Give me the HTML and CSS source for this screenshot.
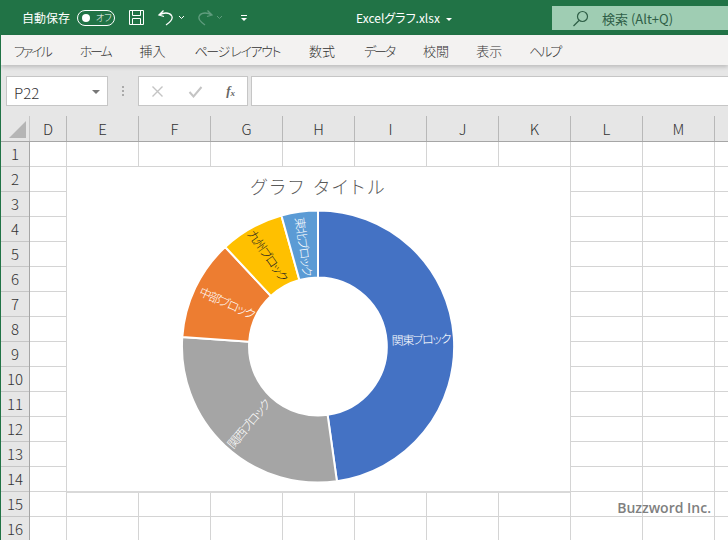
FILE: index.html
```html
<!DOCTYPE html>
<html lang="ja">
<head>
  <meta charset="UTF-8">
  <meta name="viewport" content="width=device-width, initial-scale=1.0">
  <title>Excelグラフ.xlsx</title>
  <link rel="stylesheet" href="styles.css">
</head>
<body>
  <div class="app">
    <div class="title-bar">
      <div class="quick-access">
        <span class="autosave-label">自動保存</span>
        <span class="toggle"><span class="toggle-dot"></span><span class="toggle-text">オフ</span></span>
        <svg class="icon save-icon" width="17" height="17" viewBox="0 0 17 17">
          <path d="M1.500 1.500h14v14h-14zM4.500 1.500v5h8v-5M4.500 15.500v-6h8v6" fill="none" stroke="#fff"/>
        </svg>
        <svg class="icon undo-icon" width="17" height="17" viewBox="0 0 17 17">
          <path d="M6.500 1.500L2 6l5 1.500M2.500 6C6 3.500 12 3 14.500 6.500C16.500 9.500 13.500 13 9 16" fill="none" stroke="#fff" stroke-width="1.300"/>
        </svg>
        <svg class="chevron" width="7" height="5" viewBox="0 0 7 5"><path d="M1 1l2.500 2.500L6 1" fill="none" stroke="#fff"/></svg>
        <svg class="icon redo-icon" width="17" height="17" viewBox="0 0 17 17">
          <path d="M10.500 1.500L15 6l-5 1.500M14.500 6C11 3.500 5 3 2.500 6.500C0.500 9.500 3.500 13 8 16" fill="none" stroke="#5f9c7d" stroke-width="1.300"/>
        </svg>
        <svg class="chevron redo-chevron" width="7" height="5" viewBox="0 0 7 5"><path d="M1 1l2.500 2.500L6 1" fill="none" stroke="#5f9c7d"/></svg>
        <svg class="customize" width="8" height="8" viewBox="0 0 8 8"><path d="M1 1.500h6" stroke="#fff"/><path d="M1 4l3 3 3-3z" fill="#fff"/></svg>
      </div>
      <div class="file-name">Excelグラフ.xlsx<span class="file-caret"></span></div>
      <div class="search-box">
        <svg width="17" height="17" viewBox="0 0 17 17">
          <circle cx="10.500" cy="6.500" r="5" fill="none" stroke="#2f5f47" stroke-width="1.200"/>
          <path d="M7 10.500L1.500 16" stroke="#2f5f47" stroke-width="1.200"/>
        </svg>
        <span>検索 (Alt+Q)</span>
      </div>
    </div>

    <div class="ribbon-tabs">
      <span class="kana">ファイル</span>
      <span class="kana">ホーム</span>
      <span>挿入</span>
      <span class="kana-long">ページ レイアウト</span>
      <span>数式</span>
      <span class="kana">データ</span>
      <span>校閲</span>
      <span class="tab-tight">表示</span>
      <span class="kana tab-tight">ヘルプ</span>
    </div>

    <div class="formula-bar">
      <div class="name-box">P22<span class="name-caret"></span></div>
      <div class="grip"></div>
      <div class="formula-buttons">
        <svg width="13" height="13" viewBox="0 0 13 13"><path d="M1.500 1.500l10 10M11.500 1.500l-10 10" stroke="#c4c4c4" stroke-width="1.400"/></svg>
        <svg width="15" height="13" viewBox="0 0 15 13"><path d="M1.500 7l4 4.500L13.500 2" fill="none" stroke="#c4c4c4" stroke-width="2"/></svg>
        <span class="fx">f<sub>x</sub></span>
      </div>
      <div class="formula-input"></div>
    </div>

    <div class="col-headers">
      <div class="corner"><span class="corner-mark"></span></div>
      <div class="col col-d">D</div>
      <div class="col">E</div>
      <div class="col">F</div>
      <div class="col">G</div>
      <div class="col">H</div>
      <div class="col">I</div>
      <div class="col">J</div>
      <div class="col">K</div>
      <div class="col">L</div>
      <div class="col">M</div>
      <div class="col col-end"></div>
    </div>

    <div class="sheet">
      <div class="row-headers">
        <div>1</div><div>2</div><div>3</div><div>4</div>
        <div>5</div><div>6</div><div>7</div><div>8</div>
        <div>9</div><div>10</div><div>11</div><div>12</div>
        <div>13</div><div>14</div><div>15</div><div>16</div>
      </div>
      <div class="cells">
        <div class="chart">
          <svg width="503" height="324" viewBox="0 1 503 324">
            <text class="chart-title" x="252" y="28" text-anchor="middle">グラフ タイトル</text>
            <g stroke="#fff" stroke-width="2">
              <path fill="#4472c4" d="M251 44.500A136 136 0 0 1 269.900 315.200L260.600 248.800A69 69 0 0 0 251 111.500Z"/>
              <path fill="#a5a5a5" d="M269.900 315.200A136 136 0 0 1 115.300 171L182.200 175.700A69 69 0 0 0 260.600 248.800Z"/>
              <path fill="#ed7d31" d="M115.300 171A136 136 0 0 1 158.200 81L203.900 130A69 69 0 0 0 182.200 175.700Z"/>
              <path fill="#ffc000" d="M158.200 81A136 136 0 0 1 214.400 49.500L232.400 114A69 69 0 0 0 203.900 130Z"/>
              <path fill="#5b9bd5" d="M214.400 49.500A136 136 0 0 1 251 44.500L251 111.500A69 69 0 0 0 232.400 114Z"/>
            </g>
            <text class="slice-label" text-anchor="middle" transform="translate(354 178) rotate(-2)">関東ブロック</text>
            <text class="slice-label" text-anchor="middle" transform="translate(185 261) rotate(-50)">関西ブロック</text>
            <text class="slice-label" text-anchor="middle" transform="translate(158 141) rotate(24)">中部ブロック</text>
            <text class="slice-label dark" text-anchor="middle" transform="translate(197 92) rotate(55)">九州ブロック</text>
            <text class="slice-label" text-anchor="middle" transform="translate(232 81) rotate(82)">東北ブロック</text>
          </svg>
        </div>
        <div class="watermark">Buzzword Inc.</div>
      </div>
    </div>
  </div>
</body>
</html>
```

FILE: styles.css
```css
* {
  margin: 0;
  padding: 0;
  box-sizing: border-box;
}
html,
body {
  height: 100%;
  overflow: hidden;
}
body {
  font-family: "Noto Sans CJK JP", "Open Sans", sans-serif;
  font-weight: 300;
  font-feature-settings: "palt";
  color: #333;
  background-color: #fff;
}
.app {
  width: 728px;
  height: 540px;
  overflow: hidden;
  border-left: 1px solid #217346;
}
.title-bar {
  display: flex;
  align-items: center;
  height: 35px;
  margin-left: -1px;
  padding-left: 22px;
  background-color: #217346;
  color: #fff;
  position: relative;
}
.quick-access {
  display: flex;
  align-items: center;
}
.autosave-label {
  font-size: 12px;
  font-weight: 400;
  width: 55px;
}
.toggle {
  display: flex;
  align-items: center;
  width: 38px;
  height: 16px;
  border: 1px solid #fff;
  border-radius: 8px;
  padding-left: 4px;
}
.toggle-dot {
  width: 8px;
  height: 8px;
  border-radius: 50%;
  background-color: #fff;
}
.toggle-text {
  font-size: 9px;
  margin-left: 6px;
  line-height: 14px;
  white-space: nowrap;
}
.save-icon {
  margin-left: 13px;
}
.undo-icon {
  margin-left: 12px;
}
.chevron {
  margin-left: 4px;
}
.redo-icon {
  margin-left: 12px;
}
.redo-chevron {
  margin-left: 2px;
}
.customize {
  margin-left: 17px;
}
.file-name {
  position: absolute;
  left: 356px;
  top: 9px;
  font-size: 12px;
  line-height: 17px;
  font-weight: 400;
  white-space: nowrap;
}
.file-caret {
  display: inline-block;
  margin-left: 6px;
  border-left: 3px solid transparent;
  border-right: 3px solid transparent;
  border-top: 3px solid #fff;
  vertical-align: 2px;
}
.search-box {
  display: flex;
  align-items: center;
  position: absolute;
  left: 552px;
  top: 6px;
  width: 176px;
  height: 24px;
  padding-left: 20px;
  gap: 13px;
  background-color: #9fcdb3;
  color: #2f5f47;
  font-size: 13px;
  font-weight: 400;
}
.ribbon-tabs {
  display: flex;
  align-items: center;
  gap: 29px;
  height: 30px;
  padding-left: 13px;
  background-color: #f3f2f1;
  font-size: 13px;
  white-space: nowrap;
  box-shadow: 0 2px 4px rgba(0, 0, 0, 0.18);
  position: relative;
}
.ribbon-tabs .kana {
  letter-spacing: -2.1px;
}
.ribbon-tabs .kana-long {
  letter-spacing: -1.4px;
}
.ribbon-tabs .tab-tight {
  margin-left: -2px;
}
.formula-bar {
  display: flex;
  height: 51px;
  padding: 11px 0 10px 5px;
  background-color: #e6e6e6;
}
.name-box {
  display: flex;
  align-items: center;
  justify-content: space-between;
  width: 102px;
  height: 30px;
  padding: 2px 7px 0 7px;
  background-color: #fff;
  border: 1px solid #c6c6c6;
  font-size: 15px;
}
.name-caret {
  border-left: 4px solid transparent;
  border-right: 4px solid transparent;
  border-top: 4px solid #777;
}
.grip {
  width: 2px;
  height: 10px;
  margin: 10px 14px 0 14px;
  border-left: 2px dotted #aaa;
}
.formula-buttons {
  display: flex;
  align-items: center;
  justify-content: space-between;
  width: 110px;
  height: 30px;
  padding: 0 12px;
  background-color: #fff;
  border: 1px solid #c6c6c6;
}
.fx {
  font-family: "Liberation Serif", serif;
  font-style: italic;
  font-weight: 700;
  font-size: 13px;
  color: #666;
}
.fx sub {
  font-size: 9px;
  vertical-align: -1px;
}
.formula-input {
  flex: 1;
  height: 30px;
  margin-left: 3px;
  background-color: #fff;
  border: 1px solid #c6c6c6;
  border-right: none;
}
.col-headers {
  display: flex;
  height: 26px;
  background-color: #e6e6e6;
  border-bottom: 1px solid #a6a6a6;
  font-size: 15px;
}
.corner {
  flex: none;
  width: 29px;
  position: relative;
  border-right: 1px solid #c6c6c6;
}
.corner-mark {
  position: absolute;
  right: 3px;
  bottom: 3px;
  border-left: 17px solid transparent;
  border-bottom: 17px solid #b5b5b5;
}
.col {
  flex: none;
  width: 72px;
  height: 25px;
  line-height: 25px;
  text-align: center;
  border-right: 1px solid #b8b8b8;
}
.col-d {
  width: 37px;
}
.col-end {
  border-right: none;
}
.sheet {
  display: flex;
}
.row-headers {
  flex: none;
  width: 29px;
  background-color: #e6e6e6;
  border-right: 1px solid #a6a6a6;
  font-size: 15px;
}
.row-headers div {
  height: 25px;
  line-height: 24px;
  text-align: center;
  border-bottom: 1px solid #c6c6c6;
}
.cells {
  flex: 1;
  height: 400px;
  position: relative;
  background-image:
    linear-gradient(to right, transparent 71px, #d4d4d4 71px),
    linear-gradient(to bottom, transparent 24px, #d4d4d4 24px);
  background-size: 72px 100%, 100% 25px;
  background-position: 37px 0, 0 0;
}
.chart {
  position: absolute;
  left: 37px;
  top: 25px;
  width: 503px;
  height: 326px;
  background-color: #fff;
  border-bottom: 2px solid #d9d9d9;
}
.chart svg {
  display: block;
}
.chart-title {
  font-size: 18px;
  letter-spacing: 3px;
  fill: #595959;
}
.slice-label {
  font-size: 12px;
  letter-spacing: -1.3px;
  fill: #fff;
}
.slice-label.dark {
  fill: #222;
}
.watermark {
  position: absolute;
  right: 17px;
  top: 356px;
  font-family: "Open Sans", sans-serif;
  font-weight: 600;
  font-size: 14px;
  color: #808080;
  white-space: nowrap;
}
```
